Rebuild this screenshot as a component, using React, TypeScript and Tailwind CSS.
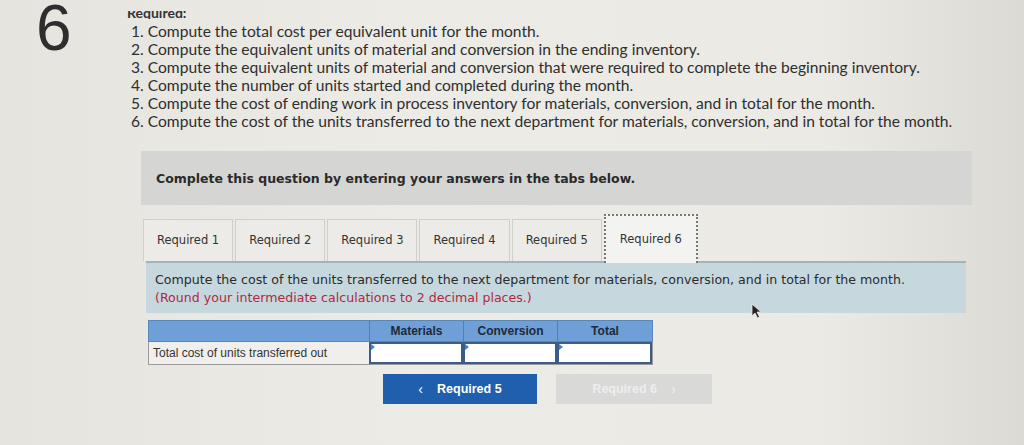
import React from 'react';

const items = [
  '1. Compute the total cost per equivalent unit for the month.',
  '2. Compute the equivalent units of material and conversion in the ending inventory.',
  '3. Compute the equivalent units of material and conversion that were required to complete the beginning inventory.',
  '4. Compute the number of units started and completed during the month.',
  '5. Compute the cost of ending work in process inventory for materials, conversion, and in total for the month.',
  '6. Compute the cost of the units transferred to the next department for materials, conversion, and in total for the month.',
];

const tabs = ['Required 1', 'Required 2', 'Required 3', 'Required 4', 'Required 5'];

const App: React.FC = () => {
  return (
    <div className="relative w-[1024px] h-[445px] overflow-hidden bg-[linear-gradient(90deg,#e6e4df_0%,#ecebe6_40%,#ebeae5_80%,#dcdad5_100%)] text-[#2d2d2d]">
      {/* Header with number and list */}
      <div className="flex">
        <div className="w-[127px] shrink-0 pl-[36px] pt-[2px]">
          <div className="text-[64px] leading-[52px] text-[#2e2e2e]" style={{ fontFamily: '"Liberation Sans", Arial, sans-serif' }}>6</div>
        </div>
        <div style={{ fontFamily: 'Lato, "Open Sans", sans-serif' }}>
          {/* heading is partly hidden under the top edge */}
          <div className="mt-[11px] h-[8px] overflow-hidden">
            <div className="text-[14px] leading-[14px] font-bold text-[#333] -mt-[5px]">Required:</div>
          </div>
          <div className="pl-[4px] mt-[3px] text-[15.6px] leading-[18px] text-[#2f2f2f]">
            {items.map((t) => (
              <div key={t}>{t}</div>
            ))}
          </div>
        </div>
      </div>

      {/* Question area */}
      <div className="ml-[141px] mt-[21px] w-[831px]" style={{ fontFamily: '"DejaVu Sans", Verdana, sans-serif' }}>
        <div className="h-[54px] bg-[#d5d5d3] flex items-center pl-[15px] pt-[2px]">
          <span className="text-[12.5px] font-bold text-[#2a2a2a]">Complete this question by entering your answers in the tabs below.</span>
        </div>

        <div className="mt-[7px] flex items-end gap-[2px] pl-[2px] h-[49px]">
          {tabs.map((t) => (
            <div
              key={t}
              className="h-[42px] px-[13px] flex items-center bg-[#ecebe7] border border-[#cfcfcc] border-b-0 text-[11.5px] text-[#333]"
            >
              {t}
            </div>
          ))}
          <div className="h-[49px] px-[14px] flex items-center bg-[#f3f3f1] border-2 border-dotted border-[#777] border-b-0 text-[11.5px] text-[#333] -mb-[2px]">
            Required 6
          </div>
        </div>

        <div className="ml-[5px] w-[820px] h-[52px] bg-[#c6d8de] border-t-2 border-[#9fb4bb] pl-[9px] pt-[8px] text-[12.6px] leading-[18px]">
          <div className="text-[#2b2b2b]">Compute the cost of the units transferred to the next department for materials, conversion, and in total for the month.</div>
          <div className="text-[#b2283f]">(Round your intermediate calculations to 2 decimal places.)</div>
        </div>

        {/* Table */}
        <div className="ml-[7px] mt-[7px] w-[505px] text-[12px]" style={{ fontFamily: '"Liberation Sans", Arial, sans-serif' }}>
          <div className="flex h-[22px] bg-[#6e9fd6] border border-[#5b86b8]">
            <div className="w-[220px]" />
            <div className="w-[94px] border-l border-[#4d7fb8] flex items-center justify-center font-bold text-[#1e2a3a]">Materials</div>
            <div className="w-[94px] border-l border-[#4d7fb8] flex items-center justify-center font-bold text-[#1e2a3a]">Conversion</div>
            <div className="flex-1 border-l border-[#4d7fb8] flex items-center justify-center font-bold text-[#1e2a3a]">Total</div>
          </div>
          <div className="flex h-[23px] border border-t-0 border-[#9a9a9a]">
            <div className="w-[220px] bg-[#f0efeb] flex items-center pl-[4px] text-[#333]">Total cost of units transferred out</div>
            {[0, 1, 2].map((i) => (
              <div key={i} className={`${i === 2 ? 'flex-1' : 'w-[94px]'} relative bg-white border-2 border-[#3a5d8a]`}>
                <span className="absolute left-0 top-0 w-0 h-0 border-t-[3px] border-b-[3px] border-l-[4px] border-t-transparent border-b-transparent border-l-[#3b82d6]" />
              </div>
            ))}
          </div>
        </div>

        {/* Nav buttons */}
        <div className="flex mt-[9px] ml-[242px] gap-[19px]" style={{ fontFamily: '"Liberation Sans", Arial, sans-serif' }}>
          <div className="w-[154px] h-[30px] bg-[#1f5fae] flex items-center justify-center gap-[14px] text-white font-bold text-[12.5px]">
            <span className="font-normal text-[14px]">‹</span>
            <span>Required 5</span>
          </div>
          <div className="w-[156px] h-[30px] bg-[#d9d9d8] flex items-center justify-center gap-[14px] text-[#eeeeee] font-bold text-[12.5px]">
            <span>Required 6</span>
            <span className="font-normal text-[14px]">›</span>
          </div>
        </div>
      </div>

      {/* Mouse cursor */}
      <svg className="absolute left-[751px] top-[303px]" width="12" height="16" viewBox="0 0 12 16">
        <path d="M1 1 L1 13 L4 10 L6.5 15 L8.5 14 L6 9 L10 9 Z" fill="#222" stroke="#eee" strokeWidth="0.8" />
      </svg>
    </div>
  );
};

export default App;
